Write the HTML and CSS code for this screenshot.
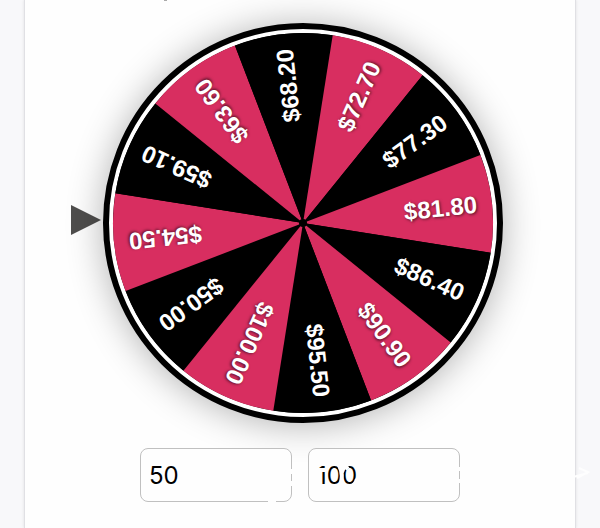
FILE: index.html
```
<!DOCTYPE html>
<html lang="en">

<head>
    <meta charset="UTF-8">
    <meta name="viewport" content="width=device-width, initial-scale=1.0">
    <title>Prize Wheel</title>
    <link rel="stylesheet" href="styles.css">
</head>

<body>
    <main class="card">
        <div class="mark"></div>
        <div class="stage">
            <svg class="pointer" viewBox="0 0 30 30" aria-hidden="true">
                <path d="M0 0L30 15L0 30Z" />
            </svg>
            <div class="wheel">
                <svg class="segments" id="segments" viewBox="-191 -191 382 382" role="img" aria-label="Prize wheel"></svg>
            </div>
        </div>
        <form class="range">
            <input type="text" inputmode="numeric" id="min" aria-label="Minimum" value="50">
            <input type="text" inputmode="numeric" id="max" aria-label="Maximum" value="100">
            <svg class="scribble" viewBox="0 0 330 60" aria-hidden="true">
                <path d="M27 21v5M27 33v5M3 54h8M51 22l10 0M52 25l4-3M74 17q5 10 1 22M80 17q-2 4-3 7M83 18l-3 3M92 31q-1 5-6 8M193 21h5M193 33h5" />
                <path class="arrow" d="M308 29l15-4M314 20l9 4l-11 6" />
            </svg>
        </form>
    </main>

    <script src="wheel.js"></script>
</body>

</html>
```
FILE: styles.css
```
body {
    font-family: Inter, "Liberation Sans", sans-serif;
    background-color: #f8f8fa;
    margin: 0;
}

.card {
    box-sizing: border-box;
    min-height: 100vh;
    margin: 0 24px;
    background: #fefefe;
    border: solid #e0e0e4;
    border-width: 0 1px;
    box-shadow: 0 0 3px rgba(0, 0, 0, 0.1);
}

.mark {
    width: 3px;
    height: 1px;
    margin: 0 0 22px 139px;
    background: #aaa;
}

.stage {
    display: flex;
    align-items: center;
    justify-content: center;
    gap: 2px;
}

.pointer {
    width: 30px;
    height: 30px;
    margin: 0 0 6px -26px;
    fill: #4f4e4d;
}

.wheel {
    box-sizing: border-box;
    width: 400px;
    padding: 3px;
    border: 6px solid #000;
    border-radius: 50%;
    background: #fff;
    box-shadow: 0 2px 36px rgba(0, 0, 0, 0.3);
}

.segments {
    display: block;
    width: 100%;
    font: bold 24px "Liberation Sans", Arial, sans-serif;
}

.slice-dark {
    fill: #000;
}

.slice-pink {
    fill: #d82e60;
}

.label {
    fill: #fff;
    text-anchor: end;
    text-shadow: 1px 1px 3px rgba(0, 0, 0, 0.6);
}

.range {
    position: relative;
    display: flex;
    justify-content: center;
    gap: 16px;
    margin-top: 25px;
}

.range input {
    box-sizing: border-box;
    width: 152px;
    height: 54px;
    padding: 0 8px;
    border: 1px solid #c0c0c0;
    border-radius: 8px;
    background: #fefefe;
    color: #000;
    font: 24px Inter, "Liberation Sans", sans-serif;
}

.scribble {
    position: absolute;
    top: 0;
    left: 240px;
    width: 330px;
    height: 60px;
    fill: none;
    stroke: #fefefe;
    stroke-width: 4;
    pointer-events: none;
}

.scribble .arrow {
    stroke-width: 2;
}
```
FILE: wheel.js
```
const prizes = ["$50.00", "$54.50", "$59.10", "$63.60", "$68.20", "$72.70",
    "$77.30", "$81.80", "$86.40", "$90.90", "$95.50", "$100.00"];
const svgNS = "http://www.w3.org/2000/svg";
const segments = document.getElementById("segments");
const radius = 190;
const step = 360 / prizes.length;
const startAngle = 144;

function point(angle) {
    const rad = angle * Math.PI / 180;
    return (radius * Math.cos(rad)) + " " + (radius * Math.sin(rad));
}

function add(tag, attrs) {
    const node = document.createElementNS(svgNS, tag);
    for (const key in attrs) {
        node.setAttribute(key, attrs[key]);
    }
    segments.appendChild(node);
    return node;
}

add("circle", { r: 190, class: "slice-dark" });

prizes.forEach((prize, i) => {
    const angle = startAngle + i * step;
    add("path", {
        d: "M0 0L" + point(angle - step / 2) + "A190 190 0 0 1 " + point(angle + step / 2) + "Z",
        class: i % 2 ? "slice-pink" : "slice-dark"
    });
});

prizes.forEach((prize, i) => {
    const label = add("text", {
        x: 175,
        y: 8,
        transform: "rotate(" + (startAngle + i * step) + ")",
        class: "label"
    });
    label.textContent = prize;
});

// hub where the slices meet
add("circle", { r: 4, class: "slice-dark" });
```
